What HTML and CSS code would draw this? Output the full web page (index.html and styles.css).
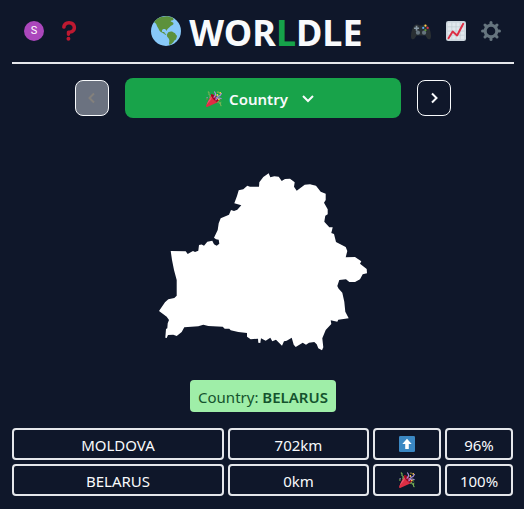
FILE: index.html
```html
<!DOCTYPE html>
<html lang="en">
<head>
<meta charset="utf-8">
<meta name="viewport" content="width=device-width, initial-scale=1">
<title>Worldle</title>
<link rel="stylesheet" href="styles.css">
</head>
<body>
<svg class="sprites" aria-hidden="true">
  <symbol id="party" viewBox="0 0 36 36">
    <path fill="#DD2E44" d="M11.6 7.6c-.2.2-.3.4-.4.7L.1 33.3c-.2.5 0 1.3.7 1.9.6.7 1.400.9 1.900.7l25-11.100c.2-.1.400-.2.600-.4 1.600-1.500-.6-6.200-4.900-10.500-4.300-4.400-9.400-6.800-11.800-6.300z"/>
    <path fill="#EA596E" d="M13 12 4.800 23 .5 32.700C2 29 8 25 12 18c1-2 1.600-4 1-6z"/>
    <path fill="#A0041E" d="M23 13c4.700 4.700 7.200 9.900 5.500 11.500-1.600 1.700-6.800-.8-11.500-5.500S10 9 11.500 7.500C13.200 6 18.300 8.300 23 13z"/>
    <path fill="none" stroke="#AA8DD8" stroke-width="2.600" stroke-linecap="round" d="M18 14c4-4 5-8 1-12M22 20c3-4 8-5 12-3"/>
    <path fill="none" stroke="#77B255" stroke-width="2.600" stroke-linecap="round" d="M5 2c5 2-1 6 3 7s-1 5 1 6M26 25c5-4 2 6 7 1 0 2-2 5 1 7"/>
    <path fill="none" stroke="#AA8DD8" stroke-width="2.600" stroke-linecap="round" d="M22 16c5 0 4-5 8-5s2-5 5-5"/>
    <g fill="#FFCC4D"><circle cx="25.500" cy="9" r="2"/><circle cx="32" cy="4" r="2"/><circle cx="29" cy="19" r="2"/><circle cx="27" cy="2.500" r="1.500"/></g>
    <g fill="#5C913B"><circle cx="2" cy="18" r="2"/><circle cx="32.500" cy="20" r="1.500"/></g>
    <circle fill="#AA8DD8" cx="2.500" cy="15" r="1.500"/>
  </symbol>
</svg>
<div class="app">
  <header class="header">
    <div class="tools tools-left">
      <button class="avatar" type="button" aria-label="Account">S</button>
      <button class="icon-button" type="button" aria-label="Help">
        <svg class="icon" viewBox="0 0 36 36"><path fill="#BE1931" d="M17 27c-1.700 0-3-1.300-3-3v-4c0-1.700 1.300-3 3-3 3.400 0 7.500-1 7.500-5C24.500 9 22 6.300 18 6.300S12 9 12 11.500a3.200 3.200 0 0 1-6.300 0C5.700 5 11 0 18 0c7.500 0 12.800 5 12.800 12 0 5.500-4 10.200-10.800 11v1c0 1.700-1.300 3-3 3z"/><circle fill="#BE1931" cx="17" cy="32" r="3.500"/></svg>
      </button>
    </div>
    <h1 class="title">
      <svg class="globe" viewBox="0 0 36 36" aria-hidden="true"><circle fill="#88C9F9" cx="18" cy="18" r="18"/><path fill="#5C913B" d="M3.500 7.400C6 4 9.500 1.800 13 .8c1.500.8 4-.5 6.500-.5 2 .2 3 1.200 5.500 1.300 1.800 1 2.200 2 2 2.800-1 1.200-2.800.5-3.300 1.500-.5.800 1.800 1.200 2.800 2 .8 1.200.5 2.500-.7 2.800-1.600.3-2.800 2-4.300 3.300-1.500 1-2.300 2-2.500 4-.8-.8-1-2-2-2.200-1.300-.2-3-.1-3.700 1.200-.5 1.500.2 2.500 1.700 2.200 1-.2 1.400.4 1.200 1.500 1 .2 1.500 1 2.300 1.700-1.500.2-2.700-.8-3.800-1.800-2-1-4.200-1.800-5-3.800-.9-2.200-2.500-4.200-3.200-6.500-.8-1.600-1.800-2.700-3-2.900z"/><path fill="#5C913B" d="M21.500 19.300c1.800-1 4.500-.8 6 .8 1.500.4 2 1.400 2.400 2.400 1.200.5 1.500 1.800.9 3-.5 2-1 3.500-2.800 4-.8 1.500-1.700 2.800-3.200 3.700-.8 1-2 1.500-2.800 1.200-.8-1-.2-2.800 0-4.200.3-2-.8-3.300-2-4.700-1-1.300-1.300-2.800-.5-4 .6-.8 1-1.800 2-2.200z"/></svg>
      <span>WOR<span class="accent">L</span>DLE</span>
    </h1>
    <div class="tools tools-right">
      <button class="icon-button" type="button" aria-label="Games">
        <svg class="icon" viewBox="0 0 36 36"><path fill="#292F33" d="M5.500 9C8 5.500 13 5.500 15.500 8h5C23 5.500 28 5.500 30.500 9c3 3.500 5 10 5.500 17 .2 5-1 7-3.500 7-3 0-4.500-4-6.500-7H10c-2 3-3.500 7-6.500 7C1 33-.2 31 0 26 .5 19 2.500 12.500 5.500 9z"/><circle fill="#66757F" cx="12.500" cy="21" r="3.800"/><circle fill="#66757F" cx="23.500" cy="21" r="3.800"/><path fill="#8899A6" d="M8.500 8.500h3v3h3v3h-3v3h-3v-3h-3v-3h3z"/><circle fill="#FFCC4D" cx="26" cy="8.500" r="2"/><circle fill="#5C913B" cx="26" cy="16.500" r="2"/><circle fill="#55ACEE" cx="22" cy="12.500" r="2"/><circle fill="#DD2E44" cx="30" cy="12.500" r="2"/></svg>
      </button>
      <button class="icon-button" type="button" aria-label="Statistics">
        <svg class="icon" viewBox="0 0 36 36"><rect fill="#CCD6DD" width="36" height="36" rx="4"/><rect fill="#E1E8ED" x="3" y="3" width="30" height="30"/><path stroke="#B8C5CD" d="M3 10.500h30M3 18h30M3 25.500h30M10.500 3v30M18 3v30M25.500 3v30"/><path fill="none" stroke="#DD2E44" stroke-width="3.500" stroke-linecap="round" stroke-linejoin="round" d="M4.500 31 12 19l8 7L31 5"/></svg>
      </button>
      <button class="icon-button" type="button" aria-label="Settings">
        <svg class="icon" viewBox="0 0 36 36"><g fill="none" stroke="#66757F"><circle cx="18" cy="18" r="10.500" stroke-width="5.500"/><path stroke-width="5.500" stroke-linecap="round" d="M18 2.800v4M18 29.200v4M2.800 18h4M29.200 18h4M7.200 7.200 10 10M26 26l2.800 2.800M7.200 28.800 10 26M26 10l2.800-2.800"/></g></svg>
      </button>
    </div>
  </header>
  <main>
    <nav class="rounds">
      <button class="step" type="button" aria-label="Previous round" disabled><svg class="chevron" viewBox="0 0 12 12"><path d="M8 1.500 3.500 6 8 10.500"/></svg></button>
      <button class="round" type="button"><svg class="mark" aria-hidden="true"><use href="#party"/></svg><span>Country</span><svg class="chevron chevron-down" viewBox="0 0 12 12"><path d="M1 3 6 8l5-5"/></svg></button>
      <button class="step" type="button" aria-label="Next round"><svg class="chevron" viewBox="0 0 12 12"><path d="M4 1.500 8.500 6 4 10.500"/></svg></button>
    </nav>
    <svg class="map" viewBox="159 173 208 178" role="img" aria-label="Country outline">
      <path fill="#fff" d="M170.700 251 185.700 251.300 187.700 254 190.700 252.300 193 251 195 252 198.300 250.700 199 245 201.700 244.500 204 245.700 207.300 241.700 212.300 240.700 214 244.300 216.700 245.700 219.300 243.700 218.700 239.700 216 239.300 214 237.700 217.700 230 218.700 223.300 220.700 218.300 229 214.700 231 210 234 211 237.300 209.700 241.300 205.300 234.300 203.300 237 196 238.700 190.300 243.300 189.300 247.300 185.700 250 186.700 259 186.700 259.300 182.300 263.300 177 268.700 173.300 270.300 177.300 274.300 176.300 278.700 176.700 281.700 181 285 179 290 178.700 294.700 182.300 294 186.700 296.700 190.700 304.700 184.700 310 184.300 316 185.700 320.700 191.700 325.700 193.700 325.700 200 324 202.700 327.700 209.300 327.700 214.300 325.300 215.700 324.300 221.700 329.300 227.300 332.700 227.300 331.300 233 334 234 336 242 345.700 247 347.300 251 345.700 257.300 355 257 361.300 261.300 360 263.700 366.700 269 367 273.300 362.700 274.300 360 279.300 355 282 349.300 282 346 279.300 339.300 280 337.300 286 338.500 288.500 342.300 292.700 344.300 301.700 345.300 311.700 348.700 318.300 338.300 319.700 337.300 321.700 330.700 320.300 331.300 324 325.700 330 322.300 338.300 323.300 347.300 322 350.300 318.300 348.300 316.700 344.300 314.300 342 309 342.700 306 344.700 302.700 342.700 295.700 347 293.700 344.700 291.700 337.700 286.700 340.700 284 341.300 282 345.700 276 339.700 272.300 341.300 270.300 337.700 265.700 340.700 261 338.300 260.300 343 258.300 342.700 258 338.700 250.700 339.300 247 336.700 247 333 238.300 332 230.700 330.300 229.300 328.700 224.700 328.700 222.700 326.700 208.300 326 203.300 324.700 198.300 326.300 184.300 327.300 181.700 332 176.700 336 173.300 334.700 168 335 166.700 338 165.300 337.700 166 329 167.300 328.300 167.700 323.300 169 320 166.700 316.700 159 311 165 302.300 168.300 299.300 174.300 298 176.700 295.700 176.700 280 174 270 172 260Z"/>
    </svg>
    <p class="answer">Country: <strong>BELARUS</strong></p>
    <table class="guesses">
      <tbody>
        <tr><td>MOLDOVA</td><td>702km</td><td><svg class="mark" viewBox="0 0 36 36" role="img" aria-label="North"><rect fill="#3B88C3" width="36" height="36" rx="3"/><path fill="#fff" d="M18 6 7.500 18H14v11h8V18h6.500z"/></svg></td><td>96%</td></tr>
        <tr><td>BELARUS</td><td>0km</td><td><svg class="mark" role="img" aria-label="Found"><use href="#party"/></svg></td><td>100%</td></tr>
      </tbody>
    </table>
  </main>
</div>
</body>
</html>
```
FILE: styles.css
```css
* {
  box-sizing: border-box;
}

body {
  margin: 0;
  background: #0f172a;
  color: #f8fafc;
  font: 15px/24px "Noto Sans", "Open Sans", sans-serif;
}

button {
  padding: 0;
  border: 0;
  background: none;
  color: inherit;
  font: inherit;
}

svg {
  display: block;
}

.sprites {
  position: absolute;
  width: 0;
  height: 0;
}

.app {
  max-width: 544px;
  margin: 0 auto;
  padding: 0 10px 12px 12px;
}

.header {
  display: flex;
  align-items: center;
  height: 64px;
  border-bottom: 2px solid #e5e7eb;
}

.tools {
  display: flex;
  align-items: center;
  gap: 15px;
}

.tools-left {
  padding: 0 24px 0 12px;
}

.tools-right {
  padding-right: 13px;
}

.avatar {
  width: 20px;
  height: 20px;
  border-radius: 50%;
  background: #ab47bc;
  color: #fff;
  font: 11px/20px Roboto, sans-serif;
  text-align: center;
}

.icon {
  width: 20px;
  height: 20px;
}

.title {
  display: flex;
  flex: 1;
  align-items: baseline;
  justify-content: center;
  gap: 8px;
  margin: 0;
  padding-top: 4px;
  font-size: 36px;
  line-height: 40px;
  font-weight: 700;
}

.globe {
  width: 30px;
  height: 30px;
}

.accent {
  color: #16a34a;
}

.rounds {
  display: flex;
  align-items: center;
  gap: 16px;
  width: 75%;
  margin: 14px auto 0;
}

.step {
  display: grid;
  place-items: center;
  width: 34px;
  height: 36px;
  border: 1px solid #f8fafc;
  border-radius: 8px;
}

.step:disabled {
  background: #6b7280;
  color: #83807c;
}

.round {
  display: flex;
  flex: 1;
  align-items: center;
  justify-content: center;
  gap: 7px;
  height: 40px;
  padding: 2px 6px 0 0;
  border-radius: 8px;
  background: #18a34a;
  font-weight: 600;
}

.chevron {
  width: 12px;
  height: 12px;
  fill: none;
  stroke: currentColor;
  stroke-width: 2;
}

.chevron-down {
  margin-left: 7px;
}

.map {
  width: 208px;
  margin: 55px auto 29px;
}

.answer {
  width: fit-content;
  margin: 0 auto 16px;
  padding: 5px 8px 3px;
  border-radius: 4px;
  background: #9feea8;
  color: #14532d;
}

.answer strong {
  font-weight: 600;
}

.guesses {
  display: block;
  padding-right: 1px;
}

.guesses tbody {
  display: grid;
  gap: 4px;
}

.guesses tr {
  display: grid;
  grid-template-columns: 212fr 141fr 68fr 68fr;
  gap: 4px;
}

.guesses td {
  display: grid;
  place-items: center;
  height: 32px;
  padding: 2px 0 0;
  border: 2px solid #e5e7eb;
  border-radius: 4px;
}

.guesses td:has(.mark) {
  padding: 0;
}

.mark {
  width: 16px;
  height: 16px;
}
```
